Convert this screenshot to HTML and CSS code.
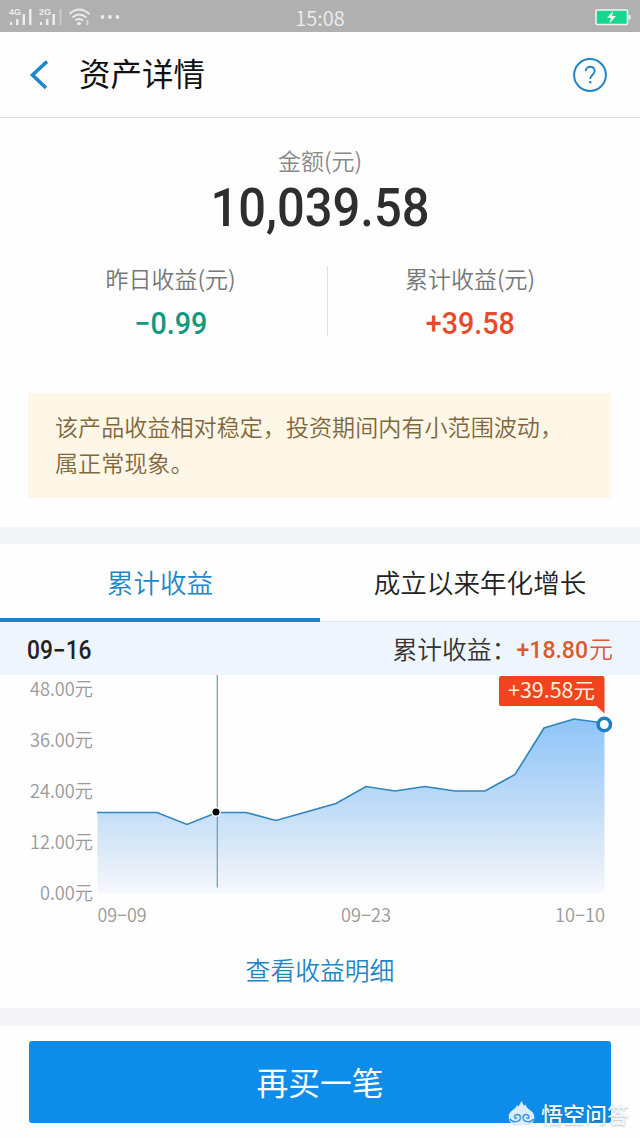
FILE: index.html
```
<!DOCTYPE html>
<html lang="zh-CN">
<head>
    <meta charset="UTF-8">
    <meta name="viewport" content="width=device-width, initial-scale=1.0">
    <title>资产详情</title>
    <link rel="stylesheet" href="styles.css">
</head>
<body>

    <!-- Status bar -->
    <div class="status-bar">
        <svg class="status-left" width="130" height="32" viewBox="0 0 130 32">
            <g class="net">
                <text x="9" y="14" textLength="12">4G</text>
                <text x="39" y="14" textLength="12">2G</text>
            </g>
            <g fill="#ececec">
                <rect x="10" y="21" width="2" height="3"/>
                <rect x="16" y="18" width="2.5" height="6"/>
                <rect x="22.5" y="13" width="2.5" height="11"/>
                <rect x="29" y="8" width="2.5" height="16"/>
                <rect x="40" y="21" width="2" height="3"/>
                <rect x="46" y="18" width="2.5" height="6"/>
                <rect x="52.5" y="13" width="2.5" height="11"/>
                <rect x="59.5" y="8" width="2" height="16" opacity=".45"/>
                <circle cx="79" cy="22.5" r="1.8"/>
                <circle cx="87.5" cy="20.5" r="1"/>
                <circle cx="87.5" cy="23" r="1"/>
                <circle cx="102.5" cy="16" r="1.9"/>
                <circle cx="110" cy="16" r="1.9"/>
                <circle cx="117.5" cy="16" r="1.9"/>
            </g>
            <path d="M69.5 13q9.500-9 20 0M72.5 16.5q6.500-6 14 0M75.5 19.5q3.500-3 7.500 0" fill="none" stroke="#ececec" stroke-width="1.8"/>
        </svg>
        <span class="time">15:08</span>
        <svg class="battery" width="36" height="17" viewBox="0 0 36 17">
            <rect x="1" y="1" width="31.5" height="14.5" rx="1" fill="#15d88e" stroke="#f2f2f2" stroke-width="1.6"/>
            <rect x="33.5" y="6" width="2" height="4.5" fill="#f2f2f2"/>
            <path d="M18 2l-6 7h4l-1.500 5.500 6.500-7.500h-4z" fill="#f2fff8"/>
        </svg>
    </div>

    <!-- Header -->
    <div class="header">
        <svg class="back" width="20" height="30" viewBox="0 0 20 30">
            <path d="M19 1.500L4.500 15l13.500 13" fill="none" stroke="#1f86cc" stroke-width="3.600"/>
        </svg>
        <h1>资产详情</h1>
        <svg class="help" width="36" height="36" viewBox="0 0 36 36">
            <circle cx="18" cy="18" r="15.9" fill="none" stroke="#2385c6" stroke-width="2"/>
            <path d="M13.700 14.200c0-5.800 9-5.800 9-.3 0 3.900-4.500 3.800-4.500 8.100" fill="none" stroke="#2385c6" stroke-width="1.9"/>
            <circle cx="18.2" cy="25.3" r="1.3" fill="#2385c6"/>
        </svg>
    </div>

    <!-- Amount -->
    <div class="summary">
        <div class="label light">金额(元)</div>
        <div class="amount"><span class="num">10,039.58</span></div>
        <div class="profits">
            <div class="profit">
                <div class="label">昨日收益(元)</div>
                <div class="value green"><span class="num">−0.99</span></div>
            </div>
            <div class="profit">
                <div class="label">累计收益(元)</div>
                <div class="value red"><span class="num">+39.58</span></div>
            </div>
        </div>
        <div class="notice">该产品收益相对稳定，投资期间内有小范围波动，<br>属正常现象。</div>
    </div>

    <!-- Chart tabs -->
    <div class="tabs">
        <div class="tab active">累计收益</div>
        <div class="tab">成立以来年化增长</div>
    </div>
    <div class="info">
        <span class="date num">09−16</span>
        <span class="info-label">累计收益：</span>
        <span class="info-value"><span class="num">+18.80</span>元</span>
    </div>

    <svg class="chart" width="640" height="255" viewBox="0 675 640 255">
        <defs>
            <linearGradient id="area" x1="0" y1="719" x2="0" y2="893" gradientUnits="userSpaceOnUse">
                <stop offset="0" stop-color="#8ec4f8"/>
                <stop offset=".5" stop-color="#c0dcf8"/>
                <stop offset=".8" stop-color="#e0ecf8"/>
                <stop offset="1" stop-color="#f6f8fd"/>
            </linearGradient>
        </defs>
        <g class="axis">
            <text x="30" y="695.5" textLength="63" lengthAdjust="spacingAndGlyphs">48.00元</text>
            <text x="30" y="746.5" textLength="63" lengthAdjust="spacingAndGlyphs">36.00元</text>
            <text x="30" y="797.5" textLength="63" lengthAdjust="spacingAndGlyphs">24.00元</text>
            <text x="30" y="848.5" textLength="63" lengthAdjust="spacingAndGlyphs">12.00元</text>
            <text x="40" y="899.5" textLength="53" lengthAdjust="spacingAndGlyphs">0.00元</text>
            <text x="97.5" y="921.5" textLength="49" lengthAdjust="spacingAndGlyphs">09−09</text>
            <text x="341" y="921.5" textLength="50" lengthAdjust="spacingAndGlyphs">09−23</text>
            <text x="555" y="921.5" textLength="50" lengthAdjust="spacingAndGlyphs">10−10</text>
        </g>
        <path d="M97.5 812.5H157l30 12 30-12h29l30 8 30-8.500 30-8.500 30-17 29 4.500 30-4.500 30 4.500h30l30-16.500 29-46.500 30-9 30.500 4V893h-507z" fill="url(#area)"/>
        <path d="M97 812.5H157l30 12 30-12h29l30 8 30-8.500 30-8.500 30-17 29 4.500 30-4.500 30 4.500h30l30-16.500 29-46.500 30-9 30 4" fill="none" stroke="#2d86bd" stroke-width="1.6"/>
        <path d="M217.3 675V887.5" stroke="#5fa3ad" stroke-width="1.2"/>
        <circle cx="216" cy="812" r="4.2" fill="#000" stroke="#fff" stroke-width="1.4"/>
        <path d="M501 676h101.500q2 0 2 2v35.500l-8-7.500H501q-2 0-2-2v-26q0-2 2-2z" fill="#f2431f"/>
        <text class="flag" x="508" y="698" textLength="87" lengthAdjust="spacingAndGlyphs">+39.58元</text>
        <circle cx="604.3" cy="724.5" r="6.2" fill="#fff" stroke="#1c80c8" stroke-width="3.5"/>
    </svg>

    <div class="link">查看收益明细</div>

    <div class="footer">
        <div class="buy">再买一笔</div>
    </div>

    <!-- Watermark over the button corner -->
    <div class="watermark">
        <svg width="28" height="27" viewBox="0 0 28 27">
            <path d="M6 25.500C-1.500 21 0 13 4 10.500 6.500 9 8 7.500 9 5l1.500 1.500L13.500 1l2.500 5 1.500-1.500c1 3 2.500 4.500 5 6C27 13 28.500 21 21.500 25.500z" fill="#dcecfb"/>
            <path d="M2 19c3 4.500 10.500 3 10.500-1.500 0-4-6-4-6-.5 0 1.500 2 2 2.500 .5M25.500 19c-3 4.500-10.500 3-10.500-1.500 0-4 6-4 6-.5 0 1.500-2 2-2.500 .5" fill="none" stroke="#3a98e2" stroke-width="1.5"/>
        </svg>
        <span>悟空问答</span>
    </div>

</body>
</html>
```
FILE: styles.css
```
body {
    margin: 0;
    width: 640px;
    height: 1138px;
    overflow: hidden;
    position: relative;
    background-color: #fefefe;
    font-family: "Noto Sans CJK SC", sans-serif;
    font-weight: 350;
    color: #333;
}
svg {
    display: block;
}
.num {
    display: inline-block;
    font-family: Roboto, "Noto Sans CJK SC", sans-serif;
    font-weight: 500;
}
.status-bar {
    display: grid;
    grid-template-columns: 1fr 60px 1fr;
    align-items: center;
    height: 32px;
    background-color: #b0b0b0;
}
.net text {
    font: bold 9px "Liberation Sans", sans-serif;
    fill: #ececec;
}
.time {
    color: #eee;
    font-size: 20px;
    line-height: 32px;
    text-align: center;
    padding-top: 2px;
}
.battery {
    justify-self: end;
    margin-right: 9px;
}
.header {
    display: flex;
    align-items: center;
    box-sizing: border-box;
    height: 86px;
    padding: 0 32px 0 28px;
    border-bottom: 1px solid #ddd;
}
h1 {
    flex: 1;
    margin: 0 0 6px 31px;
    font-size: 31.5px;
    font-weight: 400;
    line-height: 40px;
    color: #111;
}
.summary {
    height: 409px;
    border-bottom: 17px solid #f2f4f7;
    text-align: center;
}
.label {
    font-size: 23px;
    line-height: 24px;
    color: #777;
}
.label.light {
    padding-top: 30px;
    color: #888;
}
.amount {
    height: 64px;
    font-size: 54px;
    line-height: 62px;
    color: #2e2e2e;
}
.amount .num {
    transform: scaleX(.905);
}
.profits {
    display: flex;
    height: 70px;
    margin-top: 30px;
}
.profit {
    width: 284px;
}
.profit:first-child {
    width: 313px;
    padding-left: 14px;
    border-right: 1px solid #e2e2e2;
}
.value {
    font-size: 30.5px;
    line-height: 34px;
    padding-top: 14px;
}
.value .num {
    transform: scaleX(.94);
}
.green {
    color: #119a80;
}
.red {
    color: #e84a2c;
}
.notice {
    box-sizing: border-box;
    width: 583px;
    height: 105px;
    margin: 57px 0 0 28px;
    padding: 15px 0 0 27px;
    background-color: #fef6e6;
    text-align: left;
    font-size: 23.1px;
    line-height: 36px;
    white-space: nowrap;
    color: #80683c;
}
.tabs {
    display: flex;
    height: 78px;
}
.tab {
    box-sizing: border-box;
    width: 320px;
    border-bottom: 1px solid #e0e4e8;
    text-align: center;
    font-size: 26.6px;
    line-height: 75px;
    color: #222;
}
.tab.active {
    border-bottom: 4px solid #1e82c8;
    color: #1f86cc;
}
.info {
    display: flex;
    align-items: center;
    height: 53px;
    padding: 0 27px;
    background-color: #eff5fd;
    line-height: 53px;
}
.date {
    flex: 1;
    font-size: 25px;
    color: #222;
    padding-top: 3px;
    transform: scaleX(.91);
    transform-origin: left;
}
.info-label {
    font-size: 24.8px;
}
.info-value {
    font-size: 24px;
    color: #dc5a30;
}
.info-value .num {
    margin: 0 -1px 0 -1px;
    transform: scaleX(.96);
}
.chart {
    overflow: visible;
}
.axis text {
    font-size: 19px;
    fill: #999;
}
.flag {
    font-size: 21px;
    font-weight: 400;
    fill: #fff0dc;
}
.link {
    height: 78px;
    border-bottom: 18px solid #f4f4f9;
    text-align: center;
    font-size: 24.8px;
    line-height: 78px;
    color: #1f86c6;
}
.footer {
    padding: 15px 29px;
}
.buy {
    height: 82px;
    border-radius: 3px;
    background-color: #0e8ce9;
    text-align: center;
    font-size: 31.8px;
    line-height: 80px;
    font-weight: 400;
    color: #fff;
}
.watermark {
    position: absolute;
    left: 508px;
    top: 1099px;
    display: flex;
    align-items: center;
    gap: 5px;
    font-size: 22px;
    line-height: 28px;
    font-weight: 500;
    color: #eef6fe;
    text-shadow: 0 1px 2px rgba(0, 0, 0, .25);
}
```
